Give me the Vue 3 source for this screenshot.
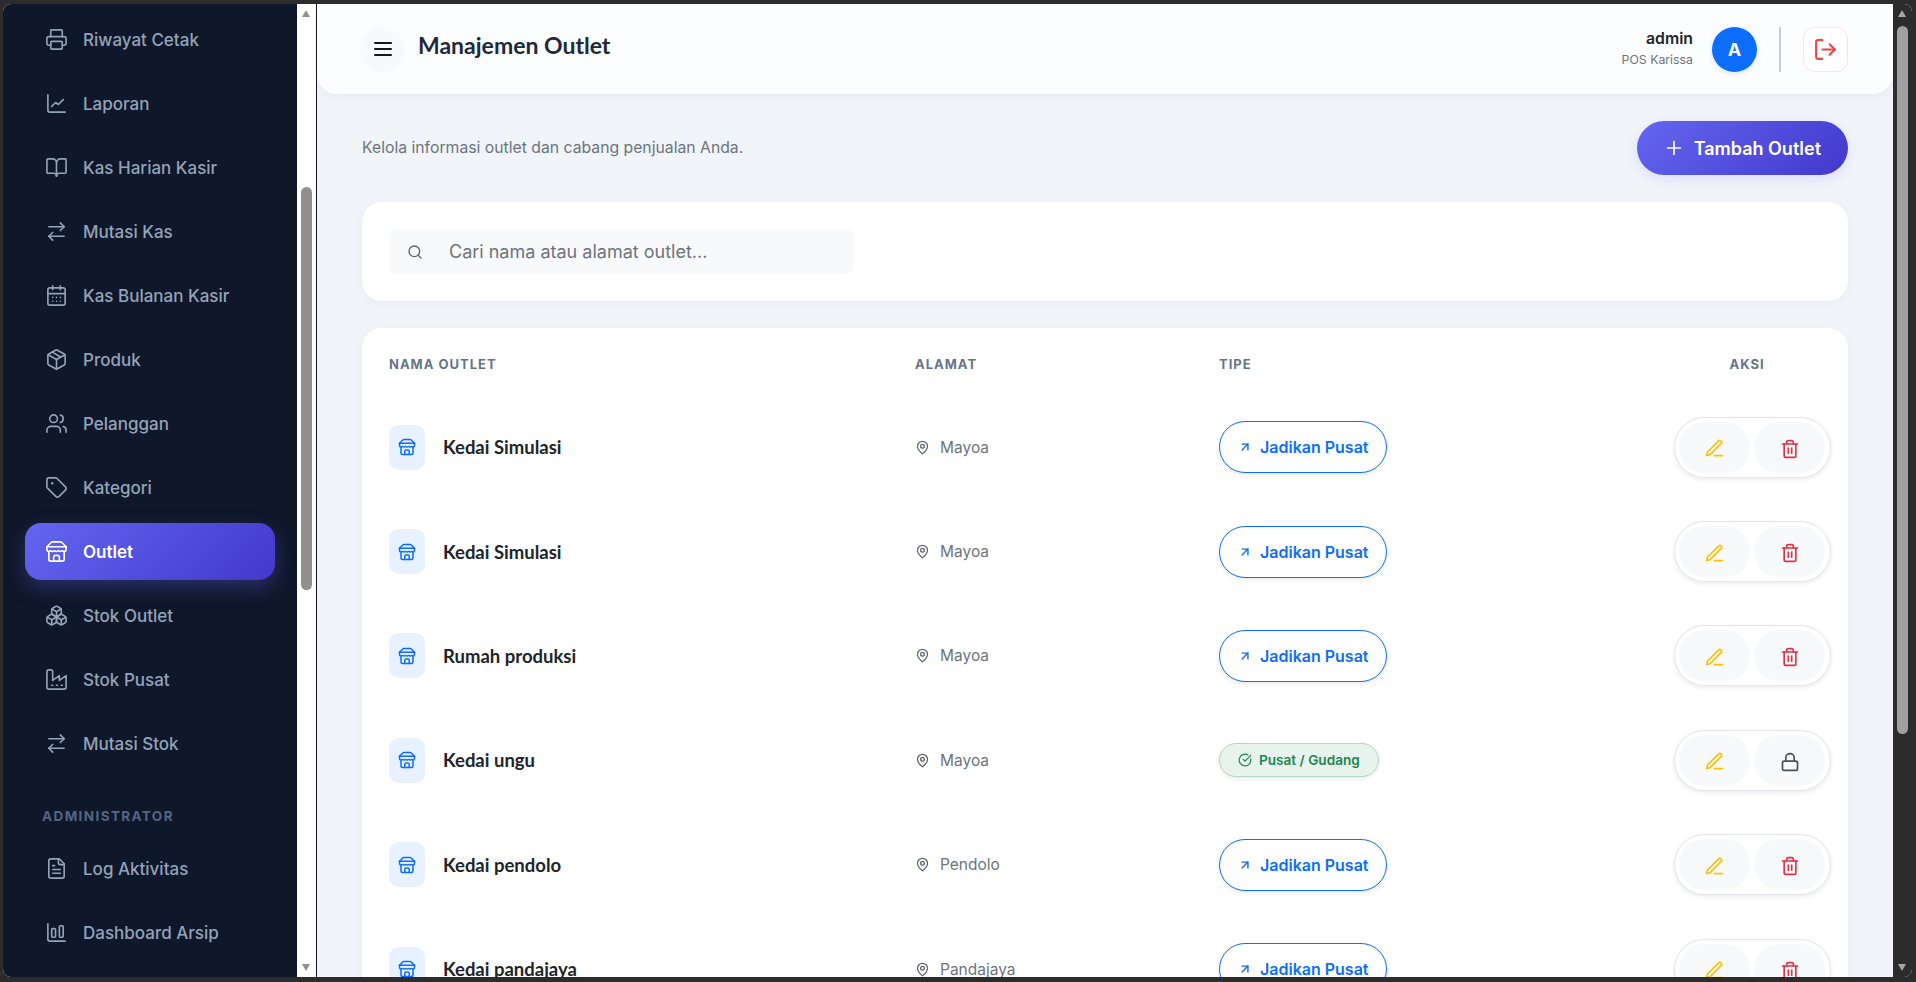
<template>
  <div class="window">
    <div class="frame">
      <aside class="sidebar">
        <nav class="nav">
          <template v-for="item in menu" :key="item.label">
            <div v-if="item.group" class="nav-group">{{ item.label }}</div>
            <a v-else class="nav-item" :class="{ active: item.label === 'Outlet' }">
              <svg class="nav-icon" viewBox="0 0 24 24" fill="none" stroke="currentColor" stroke-width="1.7" stroke-linecap="round" stroke-linejoin="round">
                <path v-for="d in icons[item.icon]" :key="d" :d="d" />
              </svg>
              <span>{{ item.label }}</span>
            </a>
          </template>
        </nav>
      </aside>
      <div class="scrollbar light">
        <span class="arrow up"></span>
        <span class="thumb side-thumb"></span>
        <span class="arrow down"></span>
      </div>

      <main class="main">
        <header class="topbar">
          <button class="menu-btn">
            <svg viewBox="0 0 24 24" fill="none" stroke="currentColor" stroke-width="2" stroke-linecap="round">
              <path v-for="d in icons.menu" :key="d" :d="d" />
            </svg>
          </button>
          <h1 class="page-title">Manajemen Outlet</h1>
          <div class="user">
            <div class="user-text">
              <div class="user-name">admin</div>
              <div class="user-role">POS Karissa</div>
            </div>
            <div class="avatar">A</div>
            <div class="divider"></div>
            <button class="logout">
              <svg viewBox="0 0 24 24" fill="none" stroke="currentColor" stroke-width="2" stroke-linecap="round" stroke-linejoin="round">
                <path v-for="d in icons.logout" :key="d" :d="d" />
              </svg>
            </button>
          </div>
        </header>

        <section class="content">
          <div class="intro">
            <p class="intro-text">Kelola informasi outlet dan cabang penjualan Anda.</p>
            <button class="add-btn">
              <svg viewBox="0 0 24 24" fill="none" stroke="currentColor" stroke-width="1.8" stroke-linecap="round">
                <path v-for="d in icons.plus" :key="d" :d="d" />
              </svg>
              Tambah Outlet
            </button>
          </div>

          <div class="card search-card">
            <div class="search">
              <svg viewBox="0 0 24 24" fill="none" stroke="currentColor" stroke-width="2" stroke-linecap="round">
                <path v-for="d in icons.search" :key="d" :d="d" />
              </svg>
              <input type="text" placeholder="Cari nama atau alamat outlet..." />
            </div>
          </div>

          <div class="card table-card">
            <div class="table-head">
              <div>NAMA OUTLET</div>
              <div>ALAMAT</div>
              <div>TIPE</div>
              <div class="head-aksi">AKSI</div>
            </div>
            <div v-for="(row, i) in outlets" :key="i" class="table-row">
              <div class="name-cell">
                <span class="store-icon">
                  <svg viewBox="0 0 24 24" fill="none" stroke="currentColor" stroke-width="2" stroke-linecap="round" stroke-linejoin="round">
                    <path v-for="d in icons.store" :key="d" :d="d" />
                  </svg>
                </span>
                <span class="outlet-name">{{ row.name }}</span>
              </div>
              <div class="address">
                <svg viewBox="0 0 24 24" fill="none" stroke="currentColor" stroke-width="2" stroke-linecap="round" stroke-linejoin="round">
                  <path v-for="d in icons.pin" :key="d" :d="d" />
                </svg>
                {{ row.address }}
              </div>
              <div>
                <span v-if="row.main" class="badge-main">
                  <svg viewBox="0 0 24 24" fill="none" stroke="currentColor" stroke-width="2" stroke-linecap="round" stroke-linejoin="round">
                    <path v-for="d in icons.check" :key="d" :d="d" />
                  </svg>
                  Pusat / Gudang
                </span>
                <button v-else class="set-main">
                  <svg viewBox="0 0 24 24" fill="none" stroke="currentColor" stroke-width="2.4" stroke-linecap="round" stroke-linejoin="round">
                    <path v-for="d in icons.arrow" :key="d" :d="d" />
                  </svg>
                  Jadikan Pusat
                </button>
              </div>
              <div class="actions">
                <button class="act edit">
                  <svg viewBox="0 0 24 24" fill="none" stroke="currentColor" stroke-width="2" stroke-linecap="round" stroke-linejoin="round">
                    <path v-for="d in icons.pen" :key="d" :d="d" />
                  </svg>
                </button>
                <button class="act" :class="row.main ? 'locked' : 'del'">
                  <svg viewBox="0 0 24 24" fill="none" stroke="currentColor" stroke-width="2" stroke-linecap="round" stroke-linejoin="round">
                    <path v-for="d in icons[row.main ? 'lock' : 'trash']" :key="d" :d="d" />
                  </svg>
                </button>
              </div>
            </div>
          </div>
        </section>
      </main>

      <div class="scrollbar dark">
        <span class="arrow up"></span>
        <span class="thumb main-thumb"></span>
        <span class="arrow down"></span>
      </div>
    </div>
  </div>
</template>

<script setup>
const store = [
  'm2 7 4.41-4.41A2 2 0 0 1 7.83 2h8.34a2 2 0 0 1 1.42.59L22 7',
  'M4 12v8a2 2 0 0 0 2 2h12a2 2 0 0 0 2-2v-8',
  'M15 22v-4a2 2 0 0 0-2-2h-2a2 2 0 0 0-2 2v4',
  'M2 7h20',
  'M22 7v3a2 2 0 0 1-2 2a2.7 2.7 0 0 1-1.59-.63.7.7 0 0 0-.82 0A2.7 2.7 0 0 1 16 12a2.7 2.7 0 0 1-1.59-.63.7.7 0 0 0-.82 0A2.7 2.7 0 0 1 12 12a2.7 2.7 0 0 1-1.59-.63.7.7 0 0 0-.82 0A2.7 2.7 0 0 1 8 12a2.7 2.7 0 0 1-1.59-.63.7.7 0 0 0-.82 0A2.7 2.7 0 0 1 4 12a2 2 0 0 1-2-2V7'
]
const swap = ['m16 3 4 4-4 4', 'M20 7H4', 'm8 21-4-4 4-4', 'M4 17h16']

const icons = {
  printer: [
    'M6 18H4a2 2 0 0 1-2-2v-5a2 2 0 0 1 2-2h16a2 2 0 0 1 2 2v5a2 2 0 0 1-2 2h-2',
    'M6 9V3a1 1 0 0 1 1-1h10a1 1 0 0 1 1 1v6',
    'M7 14h10a1 1 0 0 1 1 1v6a1 1 0 0 1-1 1H7a1 1 0 0 1-1-1v-6a1 1 0 0 1 1-1z'
  ],
  chart: ['M3 3v16a2 2 0 0 0 2 2h16', 'M7 15l4-4 3 2 5-5'],
  book: [
    'M12 7v14',
    'M3 18a1 1 0 0 1-1-1V4a1 1 0 0 1 1-1h5a4 4 0 0 1 4 4 4 4 0 0 1 4-4h5a1 1 0 0 1 1 1v13a1 1 0 0 1-1 1h-6a3 3 0 0 0-3 3 3 3 0 0 0-3-3z'
  ],
  swap,
  calendar: [
    'M8 2v4', 'M16 2v4',
    'M5 4h14a2 2 0 0 1 2 2v14a2 2 0 0 1-2 2H5a2 2 0 0 1-2-2V6a2 2 0 0 1 2-2z',
    'M3 10h18', 'M8 14h.01', 'M12 14h.01', 'M16 14h.01', 'M8 18h.01', 'M12 18h.01', 'M16 18h.01'
  ],
  box: [
    'M21 8a2 2 0 0 0-1-1.73l-7-4a2 2 0 0 0-2 0l-7 4A2 2 0 0 0 3 8v8a2 2 0 0 0 1 1.73l7 4a2 2 0 0 0 2 0l7-4A2 2 0 0 0 21 16Z',
    'm3.3 7 8.7 5 8.7-5', 'M12 22V12', 'm7.5 4.27 9 5.15'
  ],
  users: [
    'M16 21v-2a4 4 0 0 0-4-4H6a4 4 0 0 0-4 4v2',
    'M5 7a4 4 0 1 0 8 0a4 4 0 1 0-8 0',
    'M22 21v-2a4 4 0 0 0-3-3.87',
    'M16 3.13a4 4 0 0 1 0 7.75'
  ],
  tag: [
    'M12.586 2.586A2 2 0 0 0 11.172 2H4a2 2 0 0 0-2 2v7.172a2 2 0 0 0 .586 1.414l8.704 8.704a2.426 2.426 0 0 0 3.42 0l6.58-6.58a2.426 2.426 0 0 0 0-3.42z',
    'M7 7.5a.5.5 0 1 0 1 0a.5.5 0 1 0-1 0'
  ],
  store,
  boxes: [
    'M2.97 12.92A2 2 0 0 0 2 14.63v3.24a2 2 0 0 0 .97 1.71l3 1.8a2 2 0 0 0 2.06 0L12 19v-5.5l-5-3-4.03 2.42Z',
    'm7 16.5-4.74-2.85', 'm7 16.5 5-3', 'M7 16.5v5.17',
    'M12 13.5V19l3.97 2.38a2 2 0 0 0 2.06 0l3-1.8a2 2 0 0 0 .97-1.71v-3.24a2 2 0 0 0-.97-1.71L17 10.5l-5 3Z',
    'm17 16.5-5-3', 'm17 16.5 4.74-2.85', 'M17 16.5v5.17',
    'M7.97 4.42A2 2 0 0 0 7 6.13v4.37l5 3 5-3V6.13a2 2 0 0 0-.97-1.71l-3-1.8a2 2 0 0 0-2.06 0l-3 1.8Z',
    'M12 8 7.26 5.15', 'm12 8 4.74-2.85', 'M12 13.5V8'
  ],
  factory: [
    'M2 20a2 2 0 0 0 2 2h16a2 2 0 0 0 2-2V8l-7 5V8l-7 5V4a2 2 0 0 0-2-2H4a2 2 0 0 0-2 2Z',
    'M17 18h1', 'M12 18h1', 'M7 18h1'
  ],
  file: [
    'M15 2H6a2 2 0 0 0-2 2v16a2 2 0 0 0 2 2h12a2 2 0 0 0 2-2V7Z',
    'M14 2v4a2 2 0 0 0 2 2h4', 'M10 9H8', 'M16 13H8', 'M16 17H8'
  ],
  bars: [
    'M3 3v16a2 2 0 0 0 2 2h16',
    'M16 5h2a1 1 0 0 1 1 1v10a1 1 0 0 1-1 1h-2a1 1 0 0 1-1-1V6a1 1 0 0 1 1-1z',
    'M8 8h2a1 1 0 0 1 1 1v7a1 1 0 0 1-1 1H8a1 1 0 0 1-1-1V9a1 1 0 0 1 1-1z'
  ],
  menu: ['M4 6h16', 'M4 12h16', 'M4 18h16'],
  logout: ['M9 21H5a2 2 0 0 1-2-2V5a2 2 0 0 1 2-2h4', 'm16 17 5-5-5-5', 'M21 12H9'],
  plus: ['M5 12h14', 'M12 5v14'],
  search: ['M3 11a8 8 0 1 0 16 0a8 8 0 1 0-16 0', 'm21 21-4.3-4.3'],
  pin: ['M20 10c0 6-8 12-8 12s-8-6-8-12a8 8 0 0 1 16 0Z', 'M9 10a3 3 0 1 0 6 0a3 3 0 1 0-6 0'],
  check: ['M21.801 10A10 10 0 1 1 17 3.335', 'm9 11 3 3L22 4'],
  arrow: ['M7 7h10v10', 'M7 17 17 7'],
  pen: ['M12 20h9', 'M16.5 3.5a2.12 2.12 0 0 1 3 3L7 19l-4 1 1-4Z'],
  trash: [
    'M3 6h18', 'M19 6v14c0 1-1 2-2 2H7c-1 0-2-1-2-2V6',
    'M8 6V4c0-1 1-2 2-2h4c1 0 2 1 2 2v2', 'M10 11v6', 'M14 11v6'
  ],
  lock: ['M5 11h14a2 2 0 0 1 2 2v7a2 2 0 0 1-2 2H5a2 2 0 0 1-2-2v-7a2 2 0 0 1 2-2z', 'M7 11V7a5 5 0 0 1 10 0v4']
}

const menu = [
  { label: 'Riwayat Cetak', icon: 'printer' },
  { label: 'Laporan', icon: 'chart' },
  { label: 'Kas Harian Kasir', icon: 'book' },
  { label: 'Mutasi Kas', icon: 'swap' },
  { label: 'Kas Bulanan Kasir', icon: 'calendar' },
  { label: 'Produk', icon: 'box' },
  { label: 'Pelanggan', icon: 'users' },
  { label: 'Kategori', icon: 'tag' },
  { label: 'Outlet', icon: 'store' },
  { label: 'Stok Outlet', icon: 'boxes' },
  { label: 'Stok Pusat', icon: 'factory' },
  { label: 'Mutasi Stok', icon: 'swap' },
  { label: 'ADMINISTRATOR', group: true },
  { label: 'Log Aktivitas', icon: 'file' },
  { label: 'Dashboard Arsip', icon: 'bars' }
]

const outlets = [
  { name: 'Kedai Simulasi', address: 'Mayoa' },
  { name: 'Kedai Simulasi', address: 'Mayoa' },
  { name: 'Rumah produksi', address: 'Mayoa' },
  { name: 'Kedai ungu', address: 'Mayoa', main: true },
  { name: 'Kedai pendolo', address: 'Pendolo' },
  { name: 'Kedai pandajaya', address: 'Pandajaya' }
]
</script>

<style>
html, body {
  margin: 0;
  height: 100%;
  overflow: hidden;
  background: #2c2c2c;
}
</style>

<style scoped>
.window {
  width: 100vw;
  height: 100vh;
  box-sizing: border-box;
  padding: 4px 4px 5px 3px;
  background: #2c2c2c;
  font-family: Inter, "Liberation Sans", sans-serif;
}

.frame {
  display: flex;
  height: 100%;
  border-radius: 8px;
  overflow: hidden;
  background: #fff;
}

/* Sidebar */
.sidebar {
  flex: 0 0 294px;
  background: #0f172a;
  overflow: hidden;
}

.nav {
  padding: 7px 22px 0;
}

.nav-item {
  display: flex;
  align-items: center;
  gap: 15px;
  height: 57px;
  margin-bottom: 7px;
  padding-left: 20px;
  border-radius: 16px;
  color: #94a3b8;
  font-size: 17px;
  font-weight: 500;
}

.nav-item.active {
  color: #fff;
  font-weight: 600;
  background: linear-gradient(135deg, #6366f1, #4338ca);
  box-shadow: 0 8px 20px rgba(99, 102, 241, 0.3);
}

.nav-icon {
  width: 23px;
  height: 23px;
  flex: none;
}

.nav-group {
  padding: 29px 0 16px 17px;
  color: #566583;
  font-size: 13.5px;
  line-height: 16px;
  font-weight: 700;
  letter-spacing: 1.4px;
}

/* Scrollbars */
.scrollbar {
  position: relative;
  flex: 0 0 19px;
}

.scrollbar.light {
  background: #fff;
  border-right: 1px solid #101828;
  flex-basis: 20px;
  box-sizing: border-box;
}

.scrollbar.dark {
  background: #2c2c2c;
}

.arrow {
  position: absolute;
  left: 5px;
  width: 0;
  height: 0;
  border-left: 4.5px solid transparent;
  border-right: 4.5px solid transparent;
}

.arrow.up {
  top: 6px;
  border-bottom: 7px solid #8f8f8f;
}

.arrow.down {
  bottom: 6px;
  border-top: 7px solid #8f8f8f;
}

.dark .arrow.up {
  border-bottom-color: #a6a6a6;
}

.dark .arrow.down {
  border-top-color: #a6a6a6;
}

.thumb {
  position: absolute;
  left: 4px;
  width: 11px;
  border-radius: 6px;
  background: #8f8f8f;
}

.side-thumb {
  top: 183px;
  height: 403px;
}

.main-thumb {
  top: 22px;
  height: 708px;
  background: #a0a0a0;
}

/* Main */
.main {
  flex: 1;
  min-width: 0;
  display: flex;
  flex-direction: column;
  background: #f1f4f9;
  overflow: hidden;
}

.topbar {
  flex: none;
  display: flex;
  align-items: center;
  box-sizing: border-box;
  height: 90px;
  padding: 0 45px 0 43px;
  background: #fcfdff;
  border-radius: 0 0 20px 20px;
  box-shadow: 0 2px 10px rgba(15, 23, 42, 0.05);
}

.menu-btn {
  display: flex;
  align-items: center;
  justify-content: center;
  width: 45px;
  height: 45px;
  padding: 0;
  border: none;
  border-radius: 50%;
  background: #f8f9fa;
  color: #14171c;
}

.menu-btn svg {
  width: 24px;
  height: 24px;
}

.page-title {
  margin: 0 0 8px 13px;
  color: #1e293b;
  font-family: Lato, sans-serif;
  font-size: 23px;
  font-weight: 700;
}

.user {
  margin-left: auto;
  display: flex;
  align-items: center;
}

.user-text {
  text-align: right;
  margin: 0 19px 2px 0;
}

.user-name {
  color: #212529;
  font-size: 15.8px;
  line-height: 19px;
  font-weight: 600;
}

.user-role {
  margin-top: 4px;
  color: #6c757d;
  font-size: 12.3px;
  line-height: 16px;
}

.avatar {
  display: flex;
  align-items: center;
  justify-content: center;
  width: 45px;
  height: 45px;
  border-radius: 50%;
  background: #0d6efd;
  color: #fff;
  font-size: 18px;
  font-weight: 700;
  box-shadow: 0 2px 6px rgba(13, 110, 253, 0.15);
}

.divider {
  width: 2px;
  height: 45px;
  margin: 0 22px 0 22px;
  background: #c9cbd1;
}

.logout {
  display: flex;
  align-items: center;
  justify-content: center;
  width: 45px;
  height: 45px;
  padding: 0;
  border: 1px solid #fde2e2;
  border-radius: 12px;
  background: #fff;
  color: #ef4444;
}

.logout svg {
  width: 25px;
  height: 25px;
}

/* Content */
.content {
  padding: 27px 45px 0 45px;
}

.intro {
  display: flex;
  align-items: center;
  justify-content: space-between;
}

.intro-text {
  margin: 0 0 1px;
  color: #6c757d;
  font-size: 15.75px;
}

.add-btn {
  display: flex;
  align-items: center;
  gap: 9px;
  height: 54px;
  padding: 0 27px 0 26px;
  border: none;
  border-radius: 27px;
  background: linear-gradient(135deg, #6366f1, #4338ca);
  color: #fff;
  font-family: inherit;
  font-size: 18px;
  font-weight: 600;
  box-shadow: 0 4px 12px rgba(99, 102, 241, 0.15);
}

.add-btn svg {
  width: 22px;
  height: 22px;
}

.card {
  background: #fff;
  border-radius: 20px;
  box-shadow: 0 2px 10px rgba(15, 23, 42, 0.04);
}

.search-card {
  margin-top: 27px;
  padding: 27px;
}

.search {
  display: flex;
  align-items: center;
  box-sizing: border-box;
  width: 465px;
  height: 45px;
  padding-left: 18px;
  border-radius: 8px;
  background: #f8f9fa;
  color: #5c636a;
}

.search svg {
  flex: none;
  width: 16px;
  height: 16px;
}

.search input {
  flex: 1;
  min-width: 0;
  margin-left: 24px;
  border: none;
  outline: none;
  background: transparent;
  font-family: inherit;
  font-size: 18px;
  color: #212529;
}

.search input::placeholder {
  color: #6c757d;
  opacity: 1;
}

/* Table */
.table-card {
  margin-top: 27px;
  padding-left: 27px;
  padding-right: 17px;
}

.table-head,
.table-row {
  display: grid;
  grid-template-columns: 526px 304px 1fr 157px;
  align-items: center;
}

.table-head {
  height: 67px;
  padding-top: 5px;
  box-sizing: border-box;
  color: #64748b;
  font-size: 13px;
  font-weight: 700;
  letter-spacing: 1px;
}

.head-aksi {
  text-align: center;
  padding-right: 11px;
}

.table-row {
  height: 104.4px;
}

.name-cell {
  display: flex;
  align-items: center;
  gap: 18px;
}

.store-icon {
  display: flex;
  align-items: center;
  justify-content: center;
  width: 36px;
  height: 45px;
  border-radius: 10px;
  background: #e7f1ff;
  color: #0d6efd;
}

.store-icon svg {
  width: 18px;
  height: 18px;
}

.outlet-name {
  color: #212529;
  font-family: Lato, sans-serif;
  font-size: 18.5px;
  font-weight: 700;
}

.address {
  display: flex;
  align-items: center;
  gap: 10px;
  color: #6c757d;
  font-size: 15.5px;
}

.address svg {
  width: 15px;
  height: 15px;
  color: #5c636a;
}

.set-main {
  display: inline-flex;
  align-items: center;
  gap: 8px;
  box-sizing: border-box;
  width: 168px;
  height: 52px;
  padding: 0 0 0 18px;
  border: 1px solid #0d6efd;
  border-radius: 26px;
  background: #fff;
  color: #0d6efd;
  font-family: inherit;
  font-size: 16px;
  font-weight: 600;
  box-shadow: 0 2px 5px rgba(0, 0, 0, 0.08);
}

.set-main svg {
  width: 14px;
  height: 14px;
}

.badge-main {
  display: inline-flex;
  align-items: center;
  gap: 7px;
  box-sizing: border-box;
  width: 160px;
  height: 34px;
  padding-left: 18px;
  border: 1px solid #b0d8c2;
  border-radius: 17px;
  background: #e8f3ed;
  color: #198754;
  font-size: 13.6px;
  font-weight: 600;
  box-shadow: 0 2px 5px rgba(0, 0, 0, 0.08);
}

.badge-main svg {
  width: 14px;
  height: 14px;
}

.actions {
  display: flex;
  align-items: center;
  justify-content: space-between;
  box-sizing: border-box;
  width: 157px;
  height: 61px;
  padding: 0 5px 0 4px;
  border: 1px solid #e4e5ea;
  border-radius: 31px;
  background: #fff;
  box-shadow: 0 2px 5px rgba(0, 0, 0, 0.08);
}

.act {
  display: flex;
  align-items: center;
  justify-content: center;
  width: 71px;
  height: 51px;
  padding: 0;
  border: none;
  border-radius: 25px;
  background: #f8f9fa;
}

.act svg {
  width: 20px;
  height: 20px;
  margin-top: 3px;
}

.edit {
  color: #ffc107;
}

.edit svg {
  width: 21px;
  height: 21px;
}

.del {
  color: #dc3545;
}

.locked {
  color: #495057;
}
</style>
